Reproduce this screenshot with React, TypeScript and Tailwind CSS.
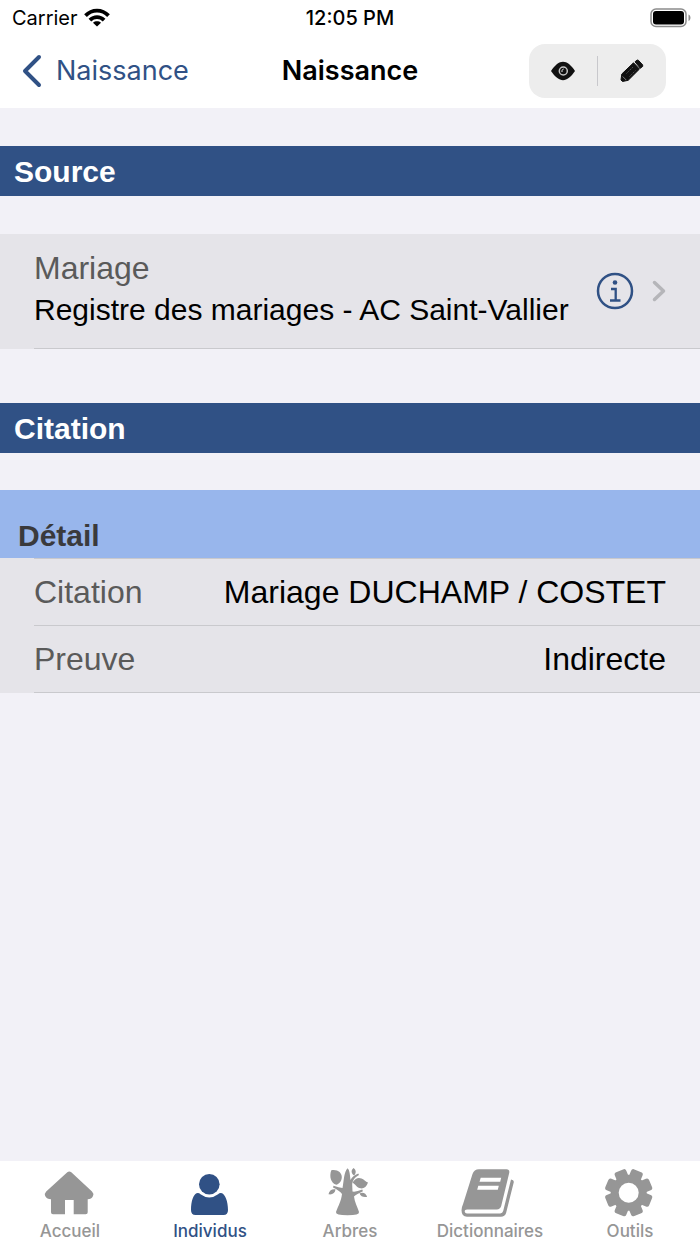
import type { ReactNode } from 'react';

// ─────────────────────────────────────────────────────────────
// Icons
// ─────────────────────────────────────────────────────────────

function WifiIcon() {
    return (
        <svg width="26" height="20" viewBox="0 0 26 20" fill="none" stroke="#000" strokeWidth="3.8" aria-hidden="true">
            <path d="M1.500 7.600C8 .9 18 .9 24.500 7.600" />
            <path d="M5.900 12.200C10 8.200 16 8.200 20.100 12.200" />
            <path d="M13 18.600l-4-3.900c2.300-1.900 5.700-1.900 8 0z" fill="#000" stroke="none" />
        </svg>
    );
}

function BatteryIcon() {
    return (
        <svg width="42" height="20" viewBox="0 0 42 20" aria-hidden="true">
            <rect x="1" y="1" width="35" height="17.500" rx="5" fill="none" stroke="#8c8c8c" strokeWidth="1.500" />
            <rect x="3" y="3" width="31" height="13.500" rx="3" fill="#000" />
            <path d="M38.500 6.500c2.600 1 2.600 5.500 0 6.500z" fill="#8c8c8c" />
        </svg>
    );
}

function BackIcon() {
    return (
        <svg width="20" height="34" viewBox="0 0 20 34" fill="none" stroke="#305185" strokeWidth="4" strokeLinecap="round" strokeLinejoin="round" aria-hidden="true">
            <path d="M17 3L3 17l14 14" />
        </svg>
    );
}

function EyeIcon() {
    return (
        <svg width="26" height="20" viewBox="0 0 26 20" aria-hidden="true">
            <path d="M1 10C5 4 9 .8 13 .8S21 4 25 10c-4 6-8 9.200-12 9.200S5 16 1 10z" fill="#111" />
            <circle cx="13.300" cy="10" r="4" fill="none" stroke="#c4c4c4" strokeWidth="1.500" />
            <path d="M12 11c-.2-1.800.3-2.600 1.600-3" fill="none" stroke="#ededed" strokeWidth="1" />
        </svg>
    );
}

function PencilIcon() {
    return (
        <svg width="24" height="24" viewBox="0 0 24 24" aria-hidden="true">
            <path d="M13.500 3.800l6 6.200L8.200 21.300 2.500 22.500 1 21l.8-6z" fill="#111" stroke="#111" strokeLinejoin="round" />
            <path d="M15 2.800L17.200 1l1.200.3 4.300 4.600v1.500l-2.400 1.900z" fill="#111" stroke="#111" strokeLinejoin="round" />
            <path d="M6.500 14.500l7-7M9.500 17.500l6-6" stroke="#666" strokeWidth=".8" strokeDasharray="1.500 1" />
            <path d="M2.700 17.500l3.500 3.500" stroke="#999" strokeWidth=".8" />
        </svg>
    );
}

function InfoIcon() {
    return (
        <svg width="38" height="38" viewBox="0 0 38 38" fill="none" stroke="#305185" strokeWidth="2.500" aria-hidden="true">
            <circle cx="19" cy="19" r="17" />
            <circle cx="19" cy="10.500" r="2.300" fill="#305185" stroke="none" />
            <path d="M15 17h4.700v11.500M14 28.500h10.500" strokeWidth="2.300" />
        </svg>
    );
}

function ChevronIcon() {
    return (
        <svg width="14" height="22" viewBox="0 0 14 22" fill="none" stroke="#b5b5b9" strokeWidth="3.500" strokeLinecap="round" strokeLinejoin="round" aria-hidden="true">
            <path d="M2.500 2.500l9 8.500-9 8.500" />
        </svg>
    );
}

function TabIcon({ children }: { children: ReactNode }) {
    return (
        <svg width="58" height="50" viewBox="-2 0 58 50" fill="currentColor" aria-hidden="true">
            {children}
        </svg>
    );
}

function HomeIcon() {
    return (
        <TabIcon>
            <path d="M24.300 4.300q2-1.500 4 0L49 23.500q2 2 1 4.500-1.500 3.300-5.300 3.300V44.300q0 2-2 2H30.700V32H22v14.300H10q-2 0-2-2V31.300q-4 0-5.800-3.300-1-2.500 1-4.500z" />
        </TabIcon>
    );
}

function PersonIcon() {
    return (
        <TabIcon>
            <path d="M13.500 25.200q2.300-.8 4 1 8.800 6.500 17.600 0 1.700-1.800 4-1C42 26.500 45 33 45 42q0 5-4.500 5h-28Q8 47 8 42c0-9 2.500-15.500 5.500-16.800z" />
            <circle cx="26.300" cy="16.300" r="10.300" />
        </TabIcon>
    );
}

function TreeIcon() {
    return (
        <TabIcon>
            <path d="M24.700.3c2 2 2.300 7.500 2.800 11.700q2-4.500 7.800-6.500l.7 1.500c-4.500 2.500-6.500 5.500-6.800 9.500l.3 7q3.500.7 9.800-2l.6 1.800c-4 2-7.300 3.700-8.900 5.200.5 5.500 3.500 10.500 5 15.500q.7 3.300-11.500 3.300T13 44c2-5.500 5.300-11 6-18q-2.500-3.500-9-6.500l.5-1.800q5.500 2 9 2.200c1.300-5 1.200-16.600 5.200-19.600z" />
            <path d="M8.300 2.200c6-1.200 10.700 2.300 10.500 7.100-.1 4.200-3.300 7.200-5.500 7.500-5.500-1.800-7.300-8.300-5-14.600z" />
            <path d="M29.500 14.500c3-4.500 6-5.300 9-4 2.200.8 4.200 3.200 6.500 4-1.300 4.300-4.300 6.300-7.500 5.800-3.500-.5-5.500-4.300-8-5.800z" />
            <path d="M5.500 26.300c.5-3.700 3.500-5.600 7-5-.3 3.700-3 5.700-7 5zM36.500 25.500c3.300-1.900 6.500-.2 7.700 3.300-3.500.8-6.500-.3-7.700-3.300zM30.500 0c2.600 1.700 3.100 4.800.6 7.500-3-2-3.300-5.200-.6-7.500z" />
        </TabIcon>
    );
}

function BookIcon() {
    return (
        <TabIcon>
            <path d="M16 1.300h27.500q3.500.2 2.700 3.700l-8 33q-1 3.400-4.500 3.400H4q-2.500 0-2.300 2 .3 2 2.300 2h33.200q2.300 0 3-2.300l7.800-31.700q3.400.3 2.700 3.200l-7.600 30.300q-1.300 3.800-5.200 3.800H4q-5.500-.5-5.500-6.500 0-3 1.500-6L9.500 6q1.500-4.500 6.500-4.700z" />
            <path d="M17.700 9.700h20.500l-1 4H16.500zM15.300 17.700h20.500l-1 4H14.200z" fill="#fff" />
        </TabIcon>
    );
}

const GEAR_TEETH = [
    'rotate(22.5 25.7 24.7)',
    'rotate(67.5 25.7 24.7)',
    'rotate(112.5 25.7 24.7)',
    'rotate(157.5 25.7 24.7)',
];

function GearIcon() {
    return (
        <TabIcon>
            <circle cx="25.700" cy="24.700" r="18" />
            {GEAR_TEETH.map((transform) => (
                <rect key={transform} x="19.500" y="1" width="12.400" height="47.400" rx="2.500" transform={transform} />
            ))}
            <circle cx="25.700" cy="24.700" r="10" fill="#fff" />
        </TabIcon>
    );
}

// ─────────────────────────────────────────────────────────────
// List parts
// ─────────────────────────────────────────────────────────────

function SectionTitle({ children }: { children: ReactNode }) {
    return (
        <h2 className="flex h-[50px] items-center bg-[#305185] px-3.5 pt-0.5 text-[30px] leading-9 font-bold text-white">
            {children}
        </h2>
    );
}

interface DetailRowProps {
    label: string;
    value: string;
}

function DetailRow({ label, value }: DetailRowProps) {
    return (
        <div className="flex h-[67px] items-center justify-between border-b border-[#c9c9cd] pr-[34px] text-[32px]">
            <dt className="text-[#5a5a5a]">{label}</dt>
            <dd>{value}</dd>
        </div>
    );
}

const DETAILS = [
    { label: 'Citation', value: 'Mariage DUCHAMP / COSTET' },
    { label: 'Preuve', value: 'Indirecte' },
];

const TABS = [
    { label: 'Accueil', icon: <HomeIcon />, active: false },
    { label: 'Individus', icon: <PersonIcon />, active: true },
    { label: 'Arbres', icon: <TreeIcon />, active: false },
    { label: 'Dictionnaires', icon: <BookIcon />, active: false },
    { label: 'Outils', icon: <GearIcon />, active: false },
];

export default function App() {
    return (
        <div className="flex min-h-screen flex-col bg-[#f2f1f7] font-['Liberation_Sans',sans-serif] text-black">
            <header className="bg-white font-['Inter',sans-serif]">
                {/* Status bar */}
                <div className="grid h-9 grid-cols-3 items-center px-2 text-xl">
                    <div className="flex items-center gap-1.5 pl-1">
                        <span>Carrier</span>
                        <WifiIcon />
                    </div>
                    <span className="text-center font-medium">12:05 PM</span>
                    <div className="flex justify-end">
                        <BatteryIcon />
                    </div>
                </div>

                {/* Navigation bar */}
                <div className="grid h-[72px] grid-cols-3 items-center px-[22px] pb-0.5 text-[27px]">
                    <button type="button" className="flex items-center gap-3.5 text-[#305185]">
                        <BackIcon />
                        Naissance
                    </button>
                    <h1 className="text-center font-semibold">Naissance</h1>
                    <div className="mr-3 flex h-[54px] w-[137px] items-center justify-self-end rounded-2xl bg-[#ededed]">
                        <button type="button" aria-label="Afficher" className="flex flex-1 justify-center">
                            <EyeIcon />
                        </button>
                        <span className="h-[30px] w-px bg-[#c8c8cc]" />
                        <button type="button" aria-label="Modifier" className="flex flex-1 justify-center">
                            <PencilIcon />
                        </button>
                    </div>
                </div>
            </header>

            <main className="flex-1 pt-[38px] text-[30px] leading-9">
                <SectionTitle>Source</SectionTitle>
                <div className="mt-[38px] bg-[#e5e4e9] pl-[34px]">
                    <div className="flex h-[115px] items-center border-b border-[#c9c9cd] pr-[34px]">
                        <div className="flex flex-1 flex-col gap-1.5 pb-1 whitespace-nowrap">
                            <span className="text-[32px] text-[#5a5a5a]">Mariage</span>
                            <span>Registre des mariages - AC Saint-Vallier</span>
                        </div>
                        <button type="button" aria-label="Informations" className="mr-[18px]">
                            <InfoIcon />
                        </button>
                        <ChevronIcon />
                    </div>
                </div>

                <div className="mt-[54px]">
                    <SectionTitle>Citation</SectionTitle>
                </div>
                <h3 className="mt-[37px] flex h-[68px] items-end bg-[#98b6ec] px-[18px] pb-1 font-bold text-[#3a3a3c]">
                    Détail
                </h3>
                <dl className="bg-[#e5e4e9] pl-[34px]">
                    <div className="border-t border-[#c9c9cd]">
                        {DETAILS.map((detail) => (
                            <DetailRow key={detail.label} label={detail.label} value={detail.value} />
                        ))}
                    </div>
                </dl>
            </main>

            {/* Tab bar */}
            <nav className="grid grid-cols-5 bg-white pt-[7px] pb-0.5 font-['Inter',sans-serif] text-[17px] font-medium">
                {TABS.map((tab) => (
                    <button
                        key={tab.label}
                        type="button"
                        className={`flex flex-col items-center gap-0.5 leading-[22px] ${tab.active ? 'text-[#305185]' : 'text-[#969696]'}`}
                    >
                        {tab.icon}
                        {tab.label}
                    </button>
                ))}
            </nav>
        </div>
    );
}
